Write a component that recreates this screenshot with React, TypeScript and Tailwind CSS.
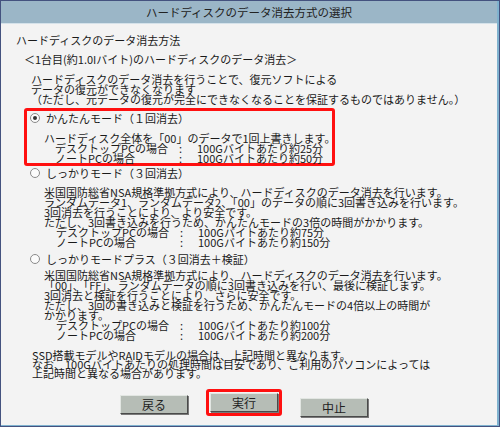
import React from 'react'

const FONT = { fontFamily: '"Noto Sans CJK JP", "Noto Sans", sans-serif' }

function Radio({ checked }: { checked?: boolean }): React.JSX.Element {
  return (
    <span className="flex h-[10px] w-[10px] shrink-0 items-center justify-center rounded-full border border-[#8a8a8a] bg-[#fbfbfb]">
      {checked && <span className="h-[4px] w-[4px] rounded-full bg-[#333]" />}
    </span>
  )
}

function TimeRow({ label, value }: { label: string; value: string }): React.JSX.Element {
  return (
    <div className="flex whitespace-nowrap">
      <span className="w-[124px]">{label}</span>
      <span className="w-[18px]">:</span>
      <span>{value}</span>
    </div>
  )
}

function Btn({ label }: { label: string }): React.JSX.Element {
  return (
    <button className="flex h-[19px] w-[68px] items-center justify-center border border-t-[#e2e6e2] border-l-[#e2e6e2] border-r-[#4a4a4a] border-b-[#4a4a4a] bg-[#b6bdb6] text-[12px] text-[#222] shadow-[1px_1px_0_#7a7a7a]">
      {label}
    </button>
  )
}

export default function App(): React.JSX.Element {
  return (
    <div className="h-[427px] w-[500px] bg-[#44527f] p-[1px]" style={FONT}>
      <div className="flex h-full flex-col border-r-2 border-b border-[#7fb2cf] bg-[#f3f3f3] text-[11px] leading-[10px] text-[#1a1a1a]">
        <div className="flex h-[23px] shrink-0 items-center justify-center border-b border-[#d5e2ea] bg-[#9bb6c7] text-[11.5px] text-[#222]">
          ハードディスクのデータ消去方式の選択
        </div>

        <div className="mt-[11px] ml-[15px]">ハードディスクのデータ消去方法</div>
        <div className="mt-[9px] ml-[23px]">＜1台目(約1.0Iバイト)のハードディスクのデータ消去＞</div>

        <div className="mt-[10px] ml-[30px] whitespace-nowrap">
          <div>ハードディスクのデータ消去を行うことで、復元ソフトによる</div>
          <div>データの復元ができなくなります</div>
          <div>（ただし、元データの復元が完全にできなくなることを保証するものではありません。）</div>
        </div>

        {/* かんたんモード */}
        <div className="mt-[4px] ml-[23px] w-[311px] rounded-[3px] border-[3px] border-[#ff1010]">
          <div className="flex h-[14px] items-center gap-[6px] pl-[3px]">
            <Radio checked />
            <span>かんたんモード（１回消去）</span>
          </div>
          <div className="mt-[8px] pl-[17px] whitespace-nowrap">
            ハードディスク全体を「00」のデータで1回上書きします。
          </div>
          <div className="pl-[28px]">
            <TimeRow label="デスクトップPCの場合" value="100Gバイトあたり約25分" />
            <TimeRow label="ノートPCの場合" value="100Gバイトあたり約50分" />
          </div>
        </div>

        {/* しっかりモード */}
        <div className="ml-[29px] flex h-[14px] items-center gap-[6px]">
          <Radio />
          <span>しっかりモード（３回消去）</span>
        </div>
        <div className="mt-[7px] ml-[43px] whitespace-nowrap">
          <div>米国国防総省NSA規格準拠方式により、ハードディスクのデータ消去を行います。</div>
          <div>ランダムデータ1、ランダムデータ2、「00」のデータの順に3回書き込みを行います。</div>
          <div>3回消去を行うことにより、より安全です。</div>
          <div>ただし、3回書き込みを行うため、かんたんモードの3倍の時間がかかります。</div>
          <div className="pl-[12px]">
            <TimeRow label="デスクトップPCの場合" value="100Gバイトあたり約75分" />
            <TimeRow label="ノートPCの場合" value="100Gバイトあたり約150分" />
          </div>
        </div>

        {/* しっかりモードプラス */}
        <div className="mt-[5px] ml-[29px] flex h-[14px] items-center gap-[6px]">
          <Radio />
          <span>しっかりモードプラス（３回消去＋検証）</span>
        </div>
        <div className="mt-[4px] ml-[43px] whitespace-nowrap">
          <div>米国国防総省NSA規格準拠方式により、ハードディスクのデータ消去を行います。</div>
          <div>「00」、「FF」、ランダムデータの順に3回書き込みを行い、最後に検証します。</div>
          <div>3回消去と検証を行うことにより、さらに安全です。</div>
          <div>ただし、3回の書き込みと検証を行うため、かんたんモードの4倍以上の時間が</div>
          <div>かかります。</div>
          <div className="pl-[12px]">
            <TimeRow label="デスクトップPCの場合" value="100Gバイトあたり約100分" />
            <TimeRow label="ノートPCの場合" value="100Gバイトあたり約200分" />
          </div>
        </div>

        <div className="mt-[11px] ml-[31px] whitespace-nowrap leading-[9px]">
          <div>SSD搭載モデルやRAIDモデルの場合は、上記時間と異なります。</div>
          <div>なお、100Gバイトあたりの処理時間は目安であり、ご利用のパソコンによっては</div>
          <div>上記時間と異なる場合があります。</div>
        </div>

        <div className="mt-[11px] ml-[119px] flex items-start">
          <div className="mt-[6px]">
            <Btn label="戻る" />
          </div>
          <div className="ml-[18px] rounded-[3px] border-[3px] border-[#ff1010] p-[1px]">
            <Btn label="実行" />
          </div>
          <div className="mt-[9px] ml-[18px]">
            <Btn label="中止" />
          </div>
        </div>
      </div>
    </div>
  )
}
